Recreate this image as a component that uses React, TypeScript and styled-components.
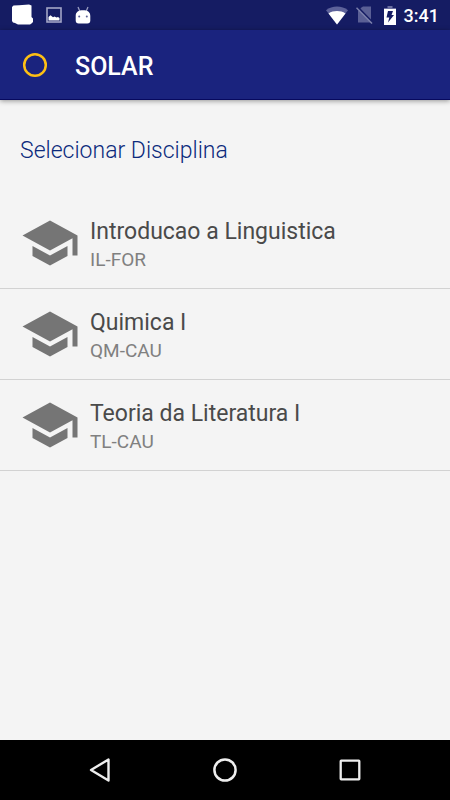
import React from 'react';
import styled, { createGlobalStyle } from 'styled-components';

const GlobalStyle = createGlobalStyle`
  *, *::before, *::after { box-sizing: border-box; }
  body { margin: 0; background: #f4f4f4; }
  button { font: inherit; border: 0; padding: 0; background: none; cursor: pointer; }
  svg { display: block; flex: none; }
`;

const Screen = styled.div`
  display: flex;
  flex-direction: column;
  min-height: 100vh;
  background: #f4f4f4;
  font-family: Roboto, 'Noto Sans', sans-serif;
`;

const StatusBar = styled.div`
  display: flex;
  align-items: center;
  justify-content: space-between;
  height: 30px;
  padding: 0 11px;
  background: #151c63;
  color: #fff;
`;

const StatusGroup = styled.div<{ $gap: number }>`
  display: flex;
  align-items: center;
  gap: ${({ $gap }) => $gap}px;
`;

const Clock = styled.time`
  padding-top: 2px;
  font-size: 18px;
  line-height: 28px;
  font-weight: 500;
`;

const AppBar = styled.header`
  display: flex;
  align-items: center;
  gap: 25px;
  height: 70px;
  padding: 0 20px;
  background: #1a237e;
  border-bottom: 1px solid #07095e;
  box-shadow: 0 1px 5px rgba(0, 0, 0, 0.4);
`;

const AppTitle = styled.h1`
  margin: 0;
  padding-top: 5px;
  color: #fff;
  font-size: 25px;
  line-height: 30px;
  font-weight: 500;
`;

const Content = styled.main`
  flex: 1;
`;

const Heading = styled.h2`
  margin: 0;
  padding: 36px 20px 32px;
  color: #0b2a7c;
  font-size: 23px;
  line-height: 30px;
  font-weight: 300;
`;

const CourseList = styled.ul`
  margin: 0;
  padding: 0;
  list-style: none;
`;

const CourseItem = styled.li`
  border-bottom: 1px solid #d2d2d2;
`;

const CourseButton = styled.button`
  display: flex;
  align-items: center;
  gap: 10px;
  width: 100%;
  padding: 15px 20px;
  text-align: left;
`;

const CourseText = styled.span`
  display: flex;
  flex-direction: column;
  padding-top: 4px;
`;

const CourseName = styled.span`
  color: #4a4a4a;
  font-size: 23px;
  line-height: 30px;
`;

const CourseCode = styled.span`
  color: #808080;
  font-size: 19px;
  line-height: 26px;
`;

const NavBar = styled.nav`
  display: flex;
  justify-content: center;
  height: 60px;
  background: #000;
`;

const NavButton = styled.button`
  display: flex;
  align-items: center;
  justify-content: center;
  width: 125px;
`;

const courses = [
  { name: 'Introducao a Linguistica', code: 'IL-FOR' },
  { name: 'Quimica I', code: 'QM-CAU' },
  { name: 'Teoria da Literatura I', code: 'TL-CAU' },
];

const NoteIcon = () => (
  <svg width="22" height="22" viewBox="0 0 22 22" aria-hidden="true">
    <path d="M1 3 2.500 1.500 8 1.200 18 .5 20.500 1.500V13L22 14.500V18l-1.500 1.500L19 20.500H7L4 19 2 18.500 1 17Z" fill="#fff" />
  </svg>
);

const ImageIcon = () => (
  <svg width="16" height="16" viewBox="0 0 16 16" aria-hidden="true">
    <rect x="1" y="1" width="14" height="14" fill="none" stroke="#a3a6c6" strokeWidth="1.600" />
    <path d="M2.500 13.500V10l2-1.800 2.500 2 1.500-.8L10.500 10.500l1.500-.5 1.500 1v2.500Z" fill="#fff" />
  </svg>
);

const RobotIcon = () => (
  <svg width="16" height="18" viewBox="0 0 16 18" aria-hidden="true">
    <path d="m3 1 1.700 4M13 1l-1.700 4" stroke="#9a9dc0" strokeWidth="1.300" />
    <path d="M.7 10C.7 6 3.500 4.300 8 4.300s7.300 1.700 7.300 5.700v4.500c0 2-1 3-3 3H3.700c-2 0-3-1-3-3Z" fill="#fff" />
    <circle cx="4.200" cy="10.500" r="1" fill="#5a5f95" />
    <circle cx="11.800" cy="10.500" r="1" fill="#5a5f95" />
  </svg>
);

const WifiIcon = () => (
  <svg width="22" height="19" viewBox="0 0 22 19" aria-hidden="true">
    <path d="M11 18.500 0 4.200C3 1.800 7 .5 11 .5s8 1.300 11 3.700Z" fill="#5d629a" />
    <path d="M11 18.500 2.500 7.500C5 5.700 8 5 11 5s6 .7 8.500 2.500Z" fill="#fff" />
  </svg>
);

const NoSimIcon = () => (
  <svg width="20" height="18" viewBox="0 0 20 18" aria-hidden="true">
    <path d="M5.500 1.500 7 .5h8v16H2V5Z" fill="#5a5f95" />
    <path d="M1.500 1 17 17" stroke="#151c63" strokeWidth="2" />
    <path d="M.5 1.800 16 17.500" stroke="#7c80ac" strokeWidth="1.500" />
  </svg>
);

const BatteryIcon = () => (
  <svg width="12" height="19" viewBox="0 0 12 19" aria-hidden="true">
    <path d="M3.500 0h5v2H12v4H0V2h3.500Z" fill="#6a6ea1" />
    <path d="M0 3h12v16H0Z" fill="#fff" />
    <path d="M4 5h5L7.500 9H10l-6 7.500 1.300-5H2.500Z" fill="#151c63" />
  </svg>
);

const RingIcon = () => (
  <svg width="30" height="30" viewBox="0 0 30 30" aria-hidden="true">
    <circle cx="15" cy="15" r="10.800" fill="none" stroke="#fdbf14" strokeWidth="2.500" />
  </svg>
);

const SchoolIcon = () => (
  <svg width="60" height="60" viewBox="0 0 24 24" aria-hidden="true">
    <path
      d="M5 13.180v4L12 21l7-3.820v-4L12 17l-7-3.820zM12 3 1 9l11 6 9-4.910V17h2V9L12 3z"
      fill="#757575"
    />
  </svg>
);

const BackIcon = () => (
  <svg width="30" height="30" viewBox="0 0 30 30" aria-hidden="true">
    <path d="M23.500 4.500v21L6 15Z" fill="none" stroke="#eee" strokeWidth="2.400" strokeLinejoin="round" />
  </svg>
);

const HomeIcon = () => (
  <svg width="30" height="30" viewBox="0 0 30 30" aria-hidden="true">
    <circle cx="15" cy="15" r="10.600" fill="none" stroke="#eee" strokeWidth="2.500" />
  </svg>
);

const RecentIcon = () => (
  <svg width="30" height="30" viewBox="0 0 30 30" aria-hidden="true">
    <rect x="5.700" y="5.700" width="18.600" height="18.600" rx="0.500" fill="none" stroke="#eee" strokeWidth="2.300" />
  </svg>
);

export default function App() {
  return (
    <Screen>
      <GlobalStyle />
      <StatusBar>
        <StatusGroup $gap={13}>
          <NoteIcon />
          <ImageIcon />
          <RobotIcon />
        </StatusGroup>
        <StatusGroup $gap={8}>
          <WifiIcon />
          <NoSimIcon />
          <BatteryIcon />
          <Clock>3:41</Clock>
        </StatusGroup>
      </StatusBar>
      <AppBar>
        <RingIcon />
        <AppTitle>SOLAR</AppTitle>
      </AppBar>
      <Content>
        <Heading>Selecionar Disciplina</Heading>
        <CourseList>
          {courses.map((course) => (
            <CourseItem key={course.code}>
              <CourseButton type="button">
                <SchoolIcon />
                <CourseText>
                  <CourseName>{course.name}</CourseName>
                  <CourseCode>{course.code}</CourseCode>
                </CourseText>
              </CourseButton>
            </CourseItem>
          ))}
        </CourseList>
      </Content>
      <NavBar>
        <NavButton type="button" aria-label="Voltar">
          <BackIcon />
        </NavButton>
        <NavButton type="button" aria-label="Início">
          <HomeIcon />
        </NavButton>
        <NavButton type="button" aria-label="Recentes">
          <RecentIcon />
        </NavButton>
      </NavBar>
    </Screen>
  );
}
